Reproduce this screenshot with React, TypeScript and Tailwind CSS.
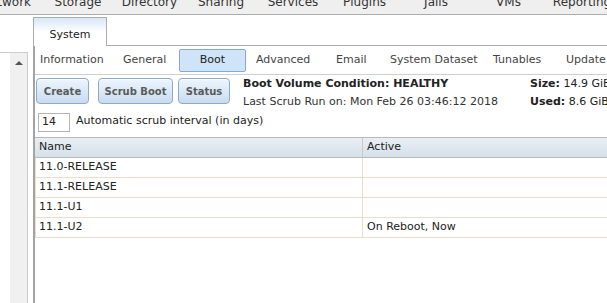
const navItems = [
  { label: "Network", w: 72 },
  { label: "Storage", w: 72 },
  { label: "Directory", w: 71 },
  { label: "Sharing", w: 72 },
  { label: "Services", w: 72 },
  { label: "Plugins", w: 71 },
  { label: "Jails", w: 72 },
  { label: "VMs", w: 73 },
  { label: "Reporting", w: 74 },
];

const subTabs = [
  { label: "Information", w: "w-[83px]" },
  { label: "General", w: "w-[56px]" },
  { label: "Boot", w: "w-[67px]", active: true },
  { label: "Advanced", w: "w-[80px]" },
  { label: "Email", w: "w-[54px]" },
  { label: "System Dataset", w: "w-[103px]" },
  { label: "Tunables", w: "w-[73px]" },
  { label: "Update", w: "w-[60px]" },
];

const envs = [
  { name: "11.0-RELEASE", active: "" },
  { name: "11.1-RELEASE", active: "" },
  { name: "11.1-U1", active: "" },
  { name: "11.1-U2", active: "On Reboot, Now" },
];

function ActionButton({ children, w }: { children: string; w: string }) {
  return (
    <button
      className={`${w} h-[26px] rounded-[4px] border border-[#8eaacb] bg-gradient-to-b from-[#eef5fc] to-[#c8dcf0] text-[10px] font-bold text-[#5a5a5a] shadow-[inset_0_1px_0_#fff]`}
    >
      {children}
    </button>
  );
}

export default function App() {
  return (
    <div className="w-[607px] h-[303px] overflow-hidden bg-white text-[#222] text-[11px] font-['DejaVu_Sans',Verdana,sans-serif]">
      {/* top menu, scrolled so its labels are half hidden */}
      <div className="h-[15px] overflow-hidden bg-[#efefef] border-b border-[#acacac]">
        <div className="flex -ml-[30px] -mt-[5px] text-[12px] text-[#333] whitespace-nowrap">
          {navItems.map((n) => (
            <div key={n.label} style={{ width: n.w }} className="shrink-0 text-center leading-[15px]">
              {n.label}
            </div>
          ))}
        </div>
      </div>

      <div className="flex h-[288px]">
        {/* left tree pane */}
        <div className="w-[28px] shrink-0 flex flex-col">
          <div className="h-[37px]" />
          <div className="flex-1 flex border-t border-r border-[#cdcdcd]">
            <div className="w-[10px]" />
            <div className="flex-1 bg-[#f0f0f0] flex justify-center pt-[8px]">
              <div className="w-0 h-0 border-x-[4px] border-x-transparent border-b-[4px] border-b-[#555]" />
            </div>
          </div>
        </div>
        <div className="w-[5px] shrink-0" />

        {/* main panel */}
        <div className="flex-1 flex flex-col pt-[2px] min-w-0">
          <div className="flex h-[29px]">
            <div className="w-[74px] shrink-0 border border-b-0 border-[#adadad] bg-gradient-to-b from-[#d6e7f7] via-white to-white flex items-end justify-center pb-[3px] text-[11px] text-[#222]">
              System
            </div>
            <div className="flex-1 border-b border-[#adadad]" />
          </div>

          <div className="flex-1 flex flex-col border-l-2 border-[#a4a4a4] min-w-0">
            <div className="h-[29px] flex items-center border-b border-[#cfcfcf] pl-[5px] whitespace-nowrap text-[#444]">
              {subTabs.map((t) =>
                t.active ? (
                  <div
                    key={t.label}
                    className={`${t.w} shrink-0 h-[23px] mr-[10px] flex items-center justify-center rounded-[2px] border border-[#86abd3] bg-[#cfe4f8] text-[#222]`}
                  >
                    {t.label}
                  </div>
                ) : (
                  <div key={t.label} className={`${t.w} shrink-0`}>
                    {t.label}
                  </div>
                )
              )}
            </div>

            <div className="flex items-start pt-[3px] pl-[1px] whitespace-nowrap">
              <div className="flex gap-[9px]">
                <ActionButton w="w-[53px]">Create</ActionButton>
                <div className="flex gap-[5px]">
                  <ActionButton w="w-[75px]">Scrub Boot</ActionButton>
                  <ActionButton w="w-[52px]">Status</ActionButton>
                </div>
              </div>
              <div className="ml-[13px] w-[287px] shrink-0 flex flex-col gap-[5px] leading-[13px] -mt-[1px]">
                <div className="font-bold">Boot Volume Condition: HEALTHY</div>
                <div className="text-[#333]">Last Scrub Run on: Mon Feb 26 03:46:12 2018</div>
              </div>
              <div className="flex flex-col gap-[5px] leading-[13px] -mt-[1px]">
                <div>
                  <span className="font-bold">Size:</span> 14.9 GiB
                </div>
                <div>
                  <span className="font-bold">Used:</span> 8.6 GiB
                </div>
              </div>
            </div>

            <div className="flex items-center mt-[5px] pl-[3px] gap-[6px] whitespace-nowrap">
              <div className="w-[32px] h-[19px] border border-[#b4b4b4] flex items-end pb-[1px] pl-[3px]">14</div>
              <div className="-mt-[2px]">Automatic scrub interval (in days)</div>
            </div>

            <div className="mt-[5px] min-w-0">
              <div className="flex h-[21px] border-y border-[#b9b9b9] bg-gradient-to-b from-[#e9eef3] to-[#d6e1ea]">
                <div className="w-[328px] shrink-0 border-r border-[#c9c9c9] pl-[4px] flex items-center">Name</div>
                <div className="flex-1 pl-[4px] flex items-center">Active</div>
              </div>
              {envs.map((e) => (
                <div key={e.name} className="flex h-[20px] border-b border-[#ecdcca] border-l">
                  <div className="w-[327px] shrink-0 border-r border-[#ecdcca] pl-[3px] flex items-center">{e.name}</div>
                  <div className="flex-1 pl-[4px] flex items-center whitespace-nowrap">{e.active}</div>
                </div>
              ))}
            </div>
          </div>
        </div>
      </div>
    </div>
  );
}
